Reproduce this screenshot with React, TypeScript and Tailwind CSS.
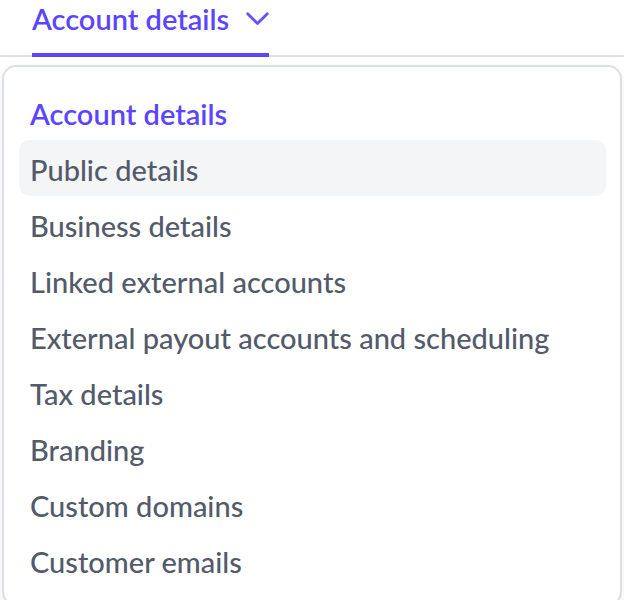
// Tab header with its open dropdown menu of account sections.

const ITEMS = [
  "Public details",
  "Business details",
  "Linked external accounts",
  "External payout accounts and scheduling",
  "Tax details",
  "Branding",
  "Custom domains",
  "Customer emails",
];

function Chevron() {
  return (
    <svg viewBox="0 0 23 14" className="w-[23px] h-[14px] text-[#6352ff]" fill="none" stroke="currentColor" strokeWidth={2.8} strokeLinecap="round" strokeLinejoin="round">
      <path d="M1.7 1.7L11.5 11.5L21.3 1.7" />
    </svg>
  );
}

export default function App() {
  return (
    <div className="w-[624px] h-[600px] overflow-hidden bg-white font-['Lato',sans-serif]">
      {/* ── Tab bar ─────────────────────────────────────────── */}
      <div className="border-b-2 border-[#dcdfe5] pl-[32px]">
        <button className="flex items-center gap-[17px] pt-[1px] pb-[16px] border-b-[4px] border-[#5b45ff] -mb-[2px] text-[29px] leading-[36px] text-[#5b45ff] font-semibold">
          Account details
          <Chevron />
        </button>
      </div>

      {/* ── Dropdown ────────────────────────────────────────── */}
      <div className="mx-[2px] mt-[8px] rounded-[14px] border-2 border-[#dcdfe5] bg-white shadow-[0_4px_14px_rgba(0,0,0,0.06)] pl-[15px] pr-[14px] pt-[17px] pb-4">
        <div className="h-[56px] flex items-center pt-[3px] px-[11px] text-[29px] font-semibold text-[#5b45ff]">
          Account details
        </div>
        {ITEMS.map((item, i) => (
          <div
            key={item}
            className={`h-[56px] flex items-center pt-[3px] px-[11px] rounded-[10px] text-[29px] font-medium text-[#535a6a] ${i === 0 ? "bg-[#f4f5f7]" : ""}`}
          >
            {item}
          </div>
        ))}
      </div>
    </div>
  );
}
